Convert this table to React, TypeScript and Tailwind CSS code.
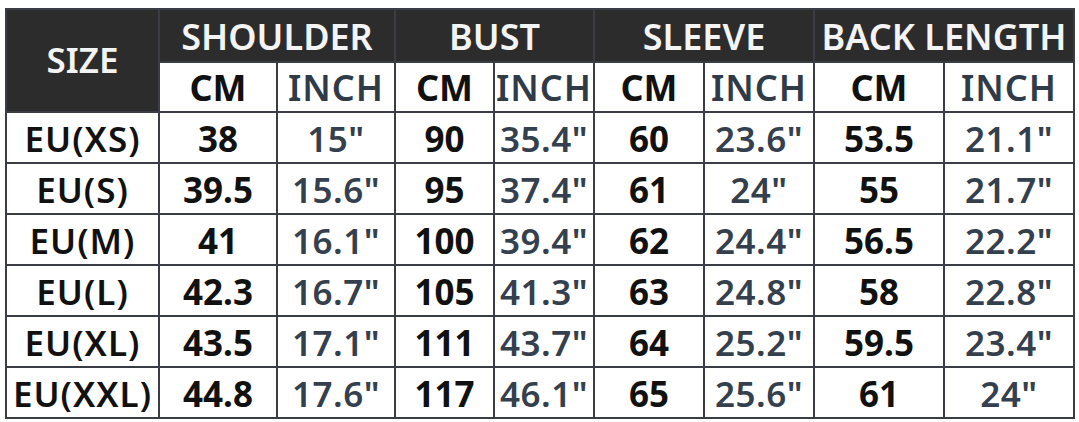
import React from "react";

const cols = [153, 118, 118, 99, 100, 110, 110, 130, 130];

const rows: string[][] = [
  ["EU(XS)", "38", '15"', "90", '35.4"', "60", '23.6"', "53.5", '21.1"'],
  ["EU(S)", "39.5", '15.6"', "95", '37.4"', "61", '24"', "55", '21.7"'],
  ["EU(M)", "41", '16.1"', "100", '39.4"', "62", '24.4"', "56.5", '22.2"'],
  ["EU(L)", "42.3", '16.7"', "105", '41.3"', "63", '24.8"', "58", '22.8"'],
  ["EU(XL)", "43.5", '17.1"', "111", '43.7"', "64", '25.2"', "59.5", '23.4"'],
  ["EU(XXL)", "44.8", '17.6"', "117", '46.1"', "65", '25.6"', "61", '24"'],
];

const groups = ["SHOULDER", "BUST", "SLEEVE", "BACK LENGTH"];

const sizeCls = "text-[35px] text-[#111] font-semibold tracking-[1px]";
const cmCls = "text-[35px] text-[#111] font-bold";
const inchCls = "text-[35px] text-[#34404d] font-semibold tracking-[0.5px]";

export default function App() {
  const font = { fontFamily: "'Noto Sans', 'DejaVu Sans Condensed', sans-serif" };
  return (
    <div
      className="w-[1079px] h-[422px] bg-white pt-[8px] pl-[5px] font-stretch-condensed"
      style={font}
    >
      <table className="table-fixed border-collapse w-[1068px]">
        <colgroup>
          {cols.map((w, i) => (
            <col key={i} style={{ width: w }} />
          ))}
        </colgroup>
        <thead>
          <tr className="h-[53px]">
            <th
              rowSpan={2}
              className="bg-[#2c2c2c] border-2 border-[#3a3e44] text-[#f4f4f4] text-[35px] font-semibold align-middle"
            >
              SIZE
            </th>
            {groups.map((g) => (
              <th
                key={g}
                colSpan={2}
                className="bg-[#2c2c2c] border-2 border-[#3a3e44] text-[#f4f4f4] text-[36px] font-semibold leading-none whitespace-nowrap pt-[3px]"
              >
                {g}
              </th>
            ))}
          </tr>
          <tr className="h-[50px]">
            {groups.map((g) => (
              <React.Fragment key={g}>
                <th className="border-2 border-[#3a3e44] text-[#111] text-[36px] font-bold leading-none pt-[2px]">
                  CM
                </th>
                <th className="border-2 border-[#3a3e44] text-[#2f3b48] text-[36px] font-semibold leading-none tracking-[1px] pt-[2px]">
                  INCH
                </th>
              </React.Fragment>
            ))}
          </tr>
        </thead>
        <tbody>
          {rows.map((r, ri) => (
            <tr key={ri} className="h-[51px]">
              {r.map((c, ci) => (
                <td
                  key={ci}
                  className={
                    "border-2 border-[#3a3e44] text-center leading-none whitespace-nowrap pt-[2px] " +
                    (ci === 0 ? sizeCls : ci % 2 === 1 ? cmCls : inchCls)
                  }
                >
                  {c}
                </td>
              ))}
            </tr>
          ))}
        </tbody>
      </table>
    </div>
  );
}
